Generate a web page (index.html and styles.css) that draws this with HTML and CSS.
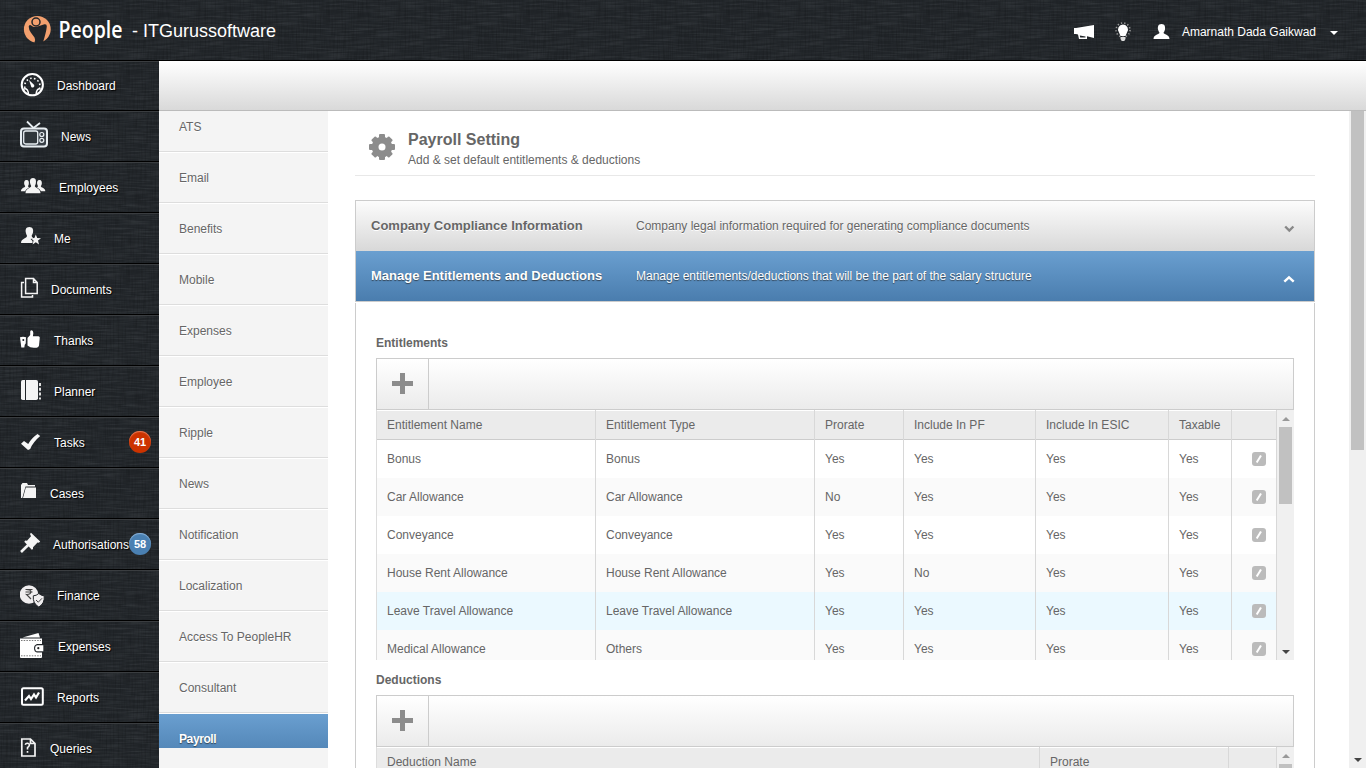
FILE: index.html
```html
<!DOCTYPE html>
<html lang="en">
  <head>
    <meta charset="UTF-8" />
    <title>People - Payroll Setting</title>
    <link rel="stylesheet" href="styles.css" />
  </head>
  <body>
    <header class="linen">
      <svg class="logo" width="108" height="60">
        <circle cx="13.3" cy="29.3" r="13.4" fill="#f3a06e" />
        <circle cx="12" cy="22" r="4" fill="#f3a06e" stroke="#212529" stroke-width="1.5" />
        <path fill="#212529" d="M4.7 26.5 Q5.5 24.4 7.2 25.4 Q10 27.8 13.5 26.6 L20.5 24.3 Q23 24 22.8 26.5 Q22.3 32 18.8 43 H10.3 Q12 40 10.5 37.5 L6.8 32.5 Q4.8 29.5 4.7 26.5 Z" />
        <text class="logo-text" x="34.5" y="38" textLength="64" lengthAdjust="spacingAndGlyphs">People</text>
      </svg>
      <h1>- ITGurussoftware</h1>
      <div class="user">
        <svg width="22" height="20" viewBox="0 0 22 20">
          <path fill="#fff" d="M0 6 L2 6 L20 3 V16 L13 14.3 V17 H5 L4 12.5 L2 12 H0 Z" />
          <path fill="#212529" d="M5.8 13.4 L11.5 14.5 V15.4 H6.2 Z" />
        </svg>
        <svg width="18" height="22" viewBox="0 0 18 22">
          <circle cx="9" cy="9" r="7" fill="none" stroke="#999" stroke-width="1.6" stroke-dasharray="1.3 2.1" />
          <path fill="#fff" d="M9 3.5 A5 5 0 0 1 13 11.5 L11.5 15 H6.5 L5 11.5 A5 5 0 0 1 9 3.5 Z" />
          <path fill="#ddd" d="M6.5 16 H11.5 V18 L10.3 20 H7.7 L6.5 18 Z" />
        </svg>
        <svg width="18" height="18" viewBox="0 0 18 18">
          <path fill="#fff" d="M8.5 1 C12 1 12.4 4 12 6.5 C11.6 8 11 9 10.5 9.8 C10.5 11.5 16.5 11.5 16.5 16 H.5 C.5 11.5 6.5 11.5 6.5 9.8 C6 9 5.4 8 5 6.5 C4.6 4 5 1 8.5 1 Z" />
        </svg>
        <span class="user-name">Amarnath Dada Gaikwad</span>
        <span class="caret"></span>
      </div>
    </header>

    <div class="page">
      <nav class="sidebar linen">
        <a class="nav-item">
          <svg width="37" height="50">
            <circle cx="12.3" cy="23.7" r="10.6" fill="none" stroke="#fff" stroke-width="2" />
            <path fill="none" stroke="#fff" stroke-width="1.6" stroke-dasharray="1.6 2.3" d="M5 27 A7.6 7.6 0 1 1 19.6 27" />
            <path fill="#fff" d="M9 19 L14.2 24 A1.8 1.8 0 0 1 11.3 26 Z" />
            <path fill="none" stroke="#fff" stroke-width="1.5" d="M4 28 Q8 27 8.5 33 M20.6 28 Q16.6 27 16.1 33" />
          </svg>
          <span>Dashboard</span>
        </a>
        <a class="nav-item">
          <svg width="41" height="50">
            <path fill="none" stroke="#e8eef2" stroke-width="1.8" d="M7 10.5 L13.5 17 L20 12" />
            <rect x="1" y="17.5" width="26" height="18" rx="3" fill="#3a4148" stroke="#e8eef2" stroke-width="2" />
            <rect x="3.7" y="20" width="14" height="13" rx="2" fill="#30363b" stroke="#e8eef2" stroke-width="1.3" />
            <circle cx="21.8" cy="23.5" r="2" fill="none" stroke="#e8eef2" stroke-width="1.2" />
            <circle cx="21.8" cy="29.3" r="2" fill="none" stroke="#e8eef2" stroke-width="1.2" />
          </svg>
          <span>News</span>
        </a>
        <a class="nav-item">
          <svg width="39" height="50">
            <path fill="#f4f4f4" d="M13 16 C16 16 16.4 19 15.8 21.5 Q15.3 23 14.8 24 C14.8 26 20.5 26 20.5 31.3 H5.5 C5.5 26 11.2 26 11.2 24 Q10.7 23 10.2 21.5 C9.6 19 10 16 13 16 Z" />
            <path fill="#f4f4f4" d="M6.5 18 C9 18 9 20.5 8.8 22 Q8.6 23.5 8 24 C8 25 9 25.2 9 25.6 Q6 27 5 29.3 H1 C1 25.5 5 26 5.2 24 Q4.5 23.5 4.2 22 C4 20 4.3 18 6.5 18 Z M19.5 18 C17 18 17 20.5 17.2 22 Q17.4 23.5 18 24 C18 25 17 25.2 17 25.6 Q20 27 21 29.3 H25.3 C25.3 25.5 21 26 20.8 24 Q21.5 23.5 21.8 22 C22 20 21.7 18 19.5 18 Z" />
          </svg>
          <span>Employees</span>
        </a>
        <a class="nav-item">
          <svg width="34" height="50">
            <path fill="#f4f4f4" d="M9.3 14 C13 14 13.5 17 13 19.5 Q12.4 21.5 11.7 22.5 Q11.5 24 13 24.8 L10.5 26 L12.5 28 V30 H1 C1 25.5 7 25.5 7 22.8 Q6.2 21.5 5.8 19.5 C5.3 17 5.7 14 9.3 14 Z" />
            <path fill="#f4f4f4" d="M15.8 21.5 L17.2 25 L21 25.2 L18 27.6 L19 31.5 L15.8 29.3 L12.6 31.5 L13.6 27.6 L10.7 25.2 L14.4 25 Z" />
          </svg>
          <span>Me</span>
        </a>
        <a class="nav-item">
          <svg width="31" height="50">
            <path fill="none" stroke="#f4f4f4" stroke-width="1.5" d="M4 18.6 H1.6 V33 H12.5 V31 M5.6 14.6 H13.5 L17.2 18.5 V29.4 H5.6 Z M13.5 14.6 V18.5 H17.2" />
          </svg>
          <span>Documents</span>
        </a>
        <a class="nav-item">
          <svg width="34" height="50">
            <path fill="#fff" d="M7.5 23 L10.2 20 V16.5 Q11 14.5 12.8 16 Q14 18 12.9 21.3 H18.5 Q20.3 21.5 19.7 23.5 L19 30.5 Q18.5 32.8 15 32.8 Q10.5 33.2 7.5 30.5 Z" />
            <path fill="#fff" d="M0 22.3 Q3 21.3 6 22.3 L5.7 28.5 Q4.5 29 4.3 32.5 H1.3 Z" />
            <circle cx="3.3" cy="25" r="1" fill="#212529" />
          </svg>
          <span>Thanks</span>
        </a>
        <a class="nav-item">
          <svg width="34" height="50">
            <rect x="1" y="14" width="17" height="20" rx="1.8" fill="#f4f4f4" />
            <path stroke="#212529" d="M5.5 14 V34" />
            <path stroke="#f4f4f4" stroke-width="1.8" stroke-dasharray="3 1.8" d="M20 17 V33.5" />
          </svg>
          <span>Planner</span>
        </a>
        <a class="nav-item">
          <svg width="34" height="50">
            <path fill="#f7f7f7" d="M1 26.8 L4 24 L8.2 27 Q12 20.5 17.5 17 L20.2 19 Q13 25 10.2 32 L8 33 Z" />
          </svg>
          <span>Tasks</span>
          <b class="badge">41</b>
        </a>
        <a class="nav-item">
          <svg width="30" height="50">
            <path fill="#f4f4f4" d="M1 30 V17 L2.5 15 H7 L8 17 H15 V18.5 H5.5 L2.3 30 Z" />
            <path fill="#f4f4f4" d="M5.8 19.5 H16 V30 H3 Z" />
          </svg>
          <span>Cases</span>
        </a>
        <a class="nav-item">
          <svg width="33" height="50">
            <path stroke="#f4f4f4" stroke-width="2.6" d="M1 33 L9.5 24.8" />
            <path fill="#f4f4f4" d="M11 13.8 L20.2 22.4 L18.8 23.8 L17.5 23.6 L13 28.3 V30 L11.8 30.8 L4.3 22.8 L5.3 21.6 L7 21.8 L11 17.3 L10 15 Z" />
          </svg>
          <span>Authorisations</span>
          <b class="badge badge-blue">58</b>
        </a>
        <a class="nav-item">
          <svg width="37" height="50">
            <circle cx="9" cy="24.5" r="9.3" fill="#f0eeef" />
            <path fill="none" stroke="#444" stroke-width="1.2" d="M5.5 19.5 H12.5 M5.5 22 H12.5 M6 19.5 Q11 19.5 11 22 Q10.5 24.7 6.5 24.5 L11 29" />
            <path fill="#f0eeef" stroke="#212529" d="M18.8 23.5 Q21.5 25.8 24.2 25.8 Q25 33.5 18.8 37 Q12.5 33.5 13.3 25.8 Q16.3 25.8 18.8 23.5 Z" />
            <path fill="none" stroke="#444" d="M16 30 L18.3 32.2 L22 28.3" />
          </svg>
          <span>Finance</span>
        </a>
        <a class="nav-item">
          <svg width="38" height="50">
            <path fill="#fff" d="M2.5 16.5 L18.5 12 L20 16.5 Z" />
            <path fill="#fff" d="M0 17.5 H22 V23 H17 Q14 24 14 27 Q14 31 17 31.5 H22 V36 Q22 37 21 37 H1 Q0 37 0 36 Z" />
            <path stroke="#555" stroke-width=".8" stroke-dasharray="1.5 1.2" d="M1 19.5 H21 M1 34.8 H21" />
            <path fill="#fff" d="M17.5 24.2 H23.3 V30.3 H17.5 Q15.2 30.3 15.2 27.2 Q15.2 24.2 17.5 24.2 Z" />
            <circle cx="18.3" cy="27.2" r="1.1" fill="#222" />
          </svg>
          <span>Expenses</span>
        </a>
        <a class="nav-item">
          <svg width="37" height="50">
            <rect x="2" y="16.3" width="20.8" height="16.4" rx="1.5" fill="none" stroke="#fff" stroke-width="2" />
            <path fill="none" stroke="#fff" stroke-width="2.2" d="M5 28.5 L9 24 L11 27 L14 22.5 L16 25.5 L19 20.5" />
          </svg>
          <span>Reports</span>
        </a>
        <a class="nav-item">
          <svg width="30" height="50">
            <path fill="none" stroke="#f4f4f4" stroke-width="1.7" d="M1.8 16 H10.5 L15 20.5 V33 H1.8 Z M10.5 16 V20.5 H15" />
            <path fill="none" stroke="#f4f4f4" stroke-width="1.6" d="M5.2 21.8 Q5.8 20 7.6 20.2 Q9.8 20.7 9.3 22.6 Q8.9 23.7 7.5 24.6 V26.5 M7.5 28 V29.8" />
          </svg>
          <span>Queries</span>
        </a>
      </nav>

      <div class="right">
        <div class="topbar"></div>
        <div class="body">
          <div class="submenu">
            <ul>
              <li>ATS</li>
              <li>Email</li>
              <li>Benefits</li>
              <li>Mobile</li>
              <li>Expenses</li>
              <li>Employee</li>
              <li>Ripple</li>
              <li>News</li>
              <li>Notification</li>
              <li>Localization</li>
              <li>Access To PeopleHR</li>
              <li>Consultant</li>
              <li class="active">Payroll</li>
            </ul>
          </div>

          <main>
            <div class="title">
              <svg width="26" height="26" viewBox="-13 -13 26 26">
                <g fill="#8c8c8c">
                  <circle r="10.3" />
                  <rect x="-3" y="-13" width="6" height="26" rx="1" />
                  <rect x="-3" y="-12.5" width="6" height="25" rx="1" transform="rotate(45)" />
                  <rect x="-3" y="-13" width="6" height="26" rx="1" transform="rotate(90)" />
                  <rect x="-3" y="-12.5" width="6" height="25" rx="1" transform="rotate(135)" />
                </g>
                <circle r="3.5" fill="#fff" />
              </svg>
              <div>
                <h2>Payroll Setting</h2>
                <p>Add &amp; set default entitlements &amp; deductions</p>
              </div>
            </div>

            <div class="accordion">
              <div class="acc-head">
                <h3>Company Compliance Information</h3>
                <p>Company legal information required for generating compliance documents</p>
                <svg width="12" height="8"><path d="M2.2 1.5 L6.3 5.5 L10.4 1.5" /></svg>
              </div>
              <div class="acc-head open">
                <h3>Manage Entitlements and Deductions</h3>
                <p>Manage entitlements/deductions that will be the part of the salary structure</p>
                <svg width="12" height="8"><path d="M1.3 6.7 L6 2.3 L10.7 6.7" /></svg>
              </div>
            </div>

            <div class="acc-body">
              <h4>Entitlements</h4>
              <div class="toolbar">
                <button class="add"><svg width="21" height="21"><path d="M10.5 0 V21 M0 10.5 H21" /></svg></button>
              </div>
              <div class="grid">
                <div class="table entitlements">
                  <div class="row head"><span>Entitlement Name</span><span>Entitlement Type</span><span>Prorate</span><span>Include In PF</span><span>Include In ESIC</span><span>Taxable</span><span></span></div>
                  <div class="row"><span>Bonus</span><span>Bonus</span><span>Yes</span><span>Yes</span><span>Yes</span><span>Yes</span><span><i class="edit"><svg width="14" height="14"><path d="M4.7 10.5 L9 3.5" /></svg></i></span></div>
                  <div class="row"><span>Car Allowance</span><span>Car Allowance</span><span>No</span><span>Yes</span><span>Yes</span><span>Yes</span><span><i class="edit"><svg width="14" height="14"><path d="M4.7 10.5 L9 3.5" /></svg></i></span></div>
                  <div class="row"><span>Conveyance</span><span>Conveyance</span><span>Yes</span><span>Yes</span><span>Yes</span><span>Yes</span><span><i class="edit"><svg width="14" height="14"><path d="M4.7 10.5 L9 3.5" /></svg></i></span></div>
                  <div class="row"><span>House Rent Allowance</span><span>House Rent Allowance</span><span>Yes</span><span>No</span><span>Yes</span><span>Yes</span><span><i class="edit"><svg width="14" height="14"><path d="M4.7 10.5 L9 3.5" /></svg></i></span></div>
                  <div class="row hover"><span>Leave Travel Allowance</span><span>Leave Travel Allowance</span><span>Yes</span><span>Yes</span><span>Yes</span><span>Yes</span><span><i class="edit"><svg width="14" height="14"><path d="M4.7 10.5 L9 3.5" /></svg></i></span></div>
                  <div class="row"><span>Medical Allowance</span><span>Others</span><span>Yes</span><span>Yes</span><span>Yes</span><span>Yes</span><span><i class="edit"><svg width="14" height="14"><path d="M4.7 10.5 L9 3.5" /></svg></i></span></div>
                </div>
                <div class="scrollbar">
                  <i class="up"></i>
                  <i class="thumb"></i>
                  <i class="down"></i>
                </div>
              </div>

              <h4 class="second">Deductions</h4>
              <div class="toolbar">
                <button class="add"><svg width="21" height="21"><path d="M10.5 0 V21 M0 10.5 H21" /></svg></button>
              </div>
              <div class="grid">
                <div class="table deductions">
                  <div class="row head"><span>Deduction Name</span><span>Prorate</span><span></span></div>
                </div>
                <div class="scrollbar">
                  <i class="up"></i>
                  <i class="thumb"></i>
                  <i class="down"></i>
                </div>
              </div>
            </div>
          </main>

          <div class="scrollbar page-scroll">
            <i class="thumb"></i>
            <i class="down"></i>
          </div>
        </div>
      </div>
    </div>
  </body>
</html>
```
FILE: styles.css
```css
* {
  box-sizing: border-box;
}
body {
  margin: 0;
  width: 1366px;
  height: 768px;
  overflow: hidden;
  font-family: "Liberation Sans", Arial, sans-serif;
  font-size: 12px;
  color: #666;
  background-color: white;
}
h1,
h2,
h3,
h4,
p,
ul {
  margin: 0;
  padding: 0;
}
svg {
  display: block;
  flex: none;
}

.linen {
  background-color: #212529;
  background-image: url("data:image/svg+xml,%3Csvg xmlns='http://www.w3.org/2000/svg' width='200' height='200'%3E%3Cfilter id='a' x='0' y='0' width='100%25' height='100%25'%3E%3CfeTurbulence type='fractalNoise' baseFrequency='.04 .6' numOctaves='2' stitchTiles='stitch'/%3E%3CfeColorMatrix values='0 0 0 0 .3 0 0 0 0 .33 0 0 0 0 .36 .3 0 0 0 -.12'/%3E%3C/filter%3E%3Cfilter id='b' x='0' y='0' width='100%25' height='100%25'%3E%3CfeTurbulence type='fractalNoise' baseFrequency='.6 .04' numOctaves='2' seed='4' stitchTiles='stitch'/%3E%3CfeColorMatrix values='0 0 0 0 0 0 0 0 0 0 0 0 0 0 0 .35 0 0 0 -.14'/%3E%3C/filter%3E%3Crect width='200' height='200' filter='url(%23a)'/%3E%3Crect width='200' height='200' filter='url(%23b)'/%3E%3C/svg%3E");
}

header {
  height: 60px;
  display: flex;
  align-items: center;
  padding: 0 28px 0 24px;
  color: white;
}
.logo {
  overflow: visible;
}
.logo-text {
  font-family: "Open Sans", sans-serif;
  font-size: 23px;
  font-weight: 600;
  fill: white;
}
h1 {
  padding-top: 2px;
  font-size: 18px;
  font-weight: normal;
}
.user {
  display: flex;
  align-items: center;
  margin-left: auto;
  padding-top: 4px;
}
.user svg {
  margin-right: 18px;
}
.user svg:nth-child(2) {
  margin-right: 21px;
}
.user svg:nth-child(3) {
  margin-right: 11px;
}
.caret {
  margin: 2px 0 0 14px;
  border: 4px solid transparent;
  border-top: 4px solid white;
  border-bottom: 0;
}

.page {
  display: flex;
  height: 708px;
}
.sidebar {
  width: 159px;
  flex: none;
  overflow: hidden;
}
.nav-item {
  display: flex;
  align-items: center;
  height: 51px;
  padding-left: 20px;
  position: relative;
  border-top: 1px solid black;
  box-shadow: inset 0 1px #3a3d40;
  color: white;
  text-shadow: 1px 1px 1px black;
}
.nav-item:first-child {
  height: 50px;
}
.nav-item span {
  padding-top: 1px;
}
.badge {
  position: absolute;
  left: 129px;
  top: 14px;
  width: 22px;
  height: 22px;
  line-height: 22px;
  border-radius: 50%;
  text-align: center;
  font-size: 11px;
  text-shadow: none;
  background-color: #cc3300;
  box-shadow: inset 0 1px 1px #e8805f;
}
.badge-blue {
  background-color: #4a80b2;
  box-shadow: inset 0 1px 1px #8db4da;
}

.right {
  flex: 1;
  border-top: 1px solid black;
}
.topbar {
  height: 50px;
  border-bottom: 1px solid #bbb;
  background-image: linear-gradient(white, #d9d9d9);
}
.body {
  display: flex;
  height: 657px;
}

.submenu {
  width: 169px;
  flex: none;
  overflow: hidden;
  background-color: #f4f4f4;
}
.submenu ul {
  list-style: none;
  height: 637px;
  overflow: hidden;
}
.submenu li {
  height: 51px;
  line-height: 51px;
  padding-left: 20px;
  border-top: 1px solid white;
  border-bottom: 1px solid #ddd;
  text-shadow: 0 1px white;
}
.submenu li:first-child {
  margin-top: -10px;
}
.submenu .active {
  height: 52px;
  color: white;
  font-weight: bold;
  letter-spacing: -0.4px;
  text-shadow: 0 1px 1px #345;
  background: linear-gradient(#6a9fd0, #4a7dae) padding-box;
}

main {
  flex: 1;
  padding: 0 34px 0 27px;
  overflow: hidden;
}
.title {
  display: flex;
  height: 65px;
  padding: 19px 0 0 14px;
  border-bottom: 1px solid #e8e8e8;
}
.title svg {
  margin: 4px 13px 0 0;
}
h2 {
  font-size: 16px;
  line-height: 19px;
}
.title p {
  line-height: 14px;
  margin-top: 4px;
}

.accordion {
  margin-top: 24px;
  border: 1px solid #ccc;
}
.acc-head {
  height: 50px;
  display: flex;
  align-items: center;
  padding: 0 19px 0 15px;
  background-image: linear-gradient(#fcfcfc, #d8d8d8);
  text-shadow: 0 1px white;
}
.acc-head h3 {
  width: 265px;
  padding-bottom: 2px;
  font-size: 13px;
}
.acc-head svg {
  margin: 5px 0 0 auto;
  fill: none;
  stroke: #888;
  stroke-width: 2.4;
}
.acc-head.open {
  color: white;
  background-image: linear-gradient(#6a9fd0, #4a7dae);
  text-shadow: 0 1px 1px #345;
}
.acc-head.open svg {
  stroke: white;
}

.acc-body {
  margin-top: 1px;
  height: 600px;
  padding: 33px 20px 0;
  border: 1px solid #ccc;
  border-top: 0;
}
h4 {
  height: 22px;
  line-height: 14px;
  font-size: 12px;
}
h4.second {
  height: 35px;
  padding-top: 13px;
}
.toolbar {
  height: 52px;
  border: 1px solid #ccc;
  background-image: linear-gradient(white, #ebebeb);
}
.add {
  width: 52px;
  height: 50px;
  padding: 0 0 1px 15px;
  border: 0;
  border-right: 1px solid #ccc;
  background: none;
}
.add path {
  stroke: #8c8c8c;
  stroke-width: 5;
}

.grid {
  display: flex;
  height: 250px;
  overflow: hidden;
}
.table {
  flex: 1;
  border-left: 1px solid #ddd;
}
.row {
  display: grid;
  height: 38px;
  line-height: 38px;
}
.entitlements .row {
  grid-template-columns: 219px 219px 89px 132px 133px 63px 45px;
}
.deductions .row {
  grid-template-columns: 663px 189px 48px;
}
.row span {
  padding-left: 10px;
  border-right: 1px solid #d8d8d8;
  white-space: nowrap;
}
.row:nth-child(odd) {
  background-color: #fafafa;
}
.row.head {
  height: 30px;
  line-height: 30px;
  background-color: #ebebeb;
  border-bottom: 1px solid #ccc;
  box-shadow: inset 0 1px white;
}
.row.hover {
  background-color: #ebf9ff;
}
.edit {
  display: block;
  width: 14px;
  height: 14px;
  margin: 12px 0 0 10px;
  border-radius: 3px;
  background-color: #bbb;
}
.edit path {
  stroke: white;
  stroke-width: 2;
}

.scrollbar {
  width: 17px;
  flex: none;
  display: flex;
  flex-direction: column;
  align-items: center;
  background-color: #f0f0f0;
}
.scrollbar .up {
  margin: 7px 0 6px;
  border: 4px solid transparent;
  border-top: 0;
  border-bottom: 4px solid #999;
}
.scrollbar .down {
  margin: auto 0 6px;
  border: 4px solid transparent;
  border-bottom: 0;
  border-top: 4px solid #444;
}
.scrollbar .thumb {
  width: 13px;
  height: 77px;
  background-color: #c1c1c1;
}
.page-scroll .thumb {
  height: 339px;
}
```
